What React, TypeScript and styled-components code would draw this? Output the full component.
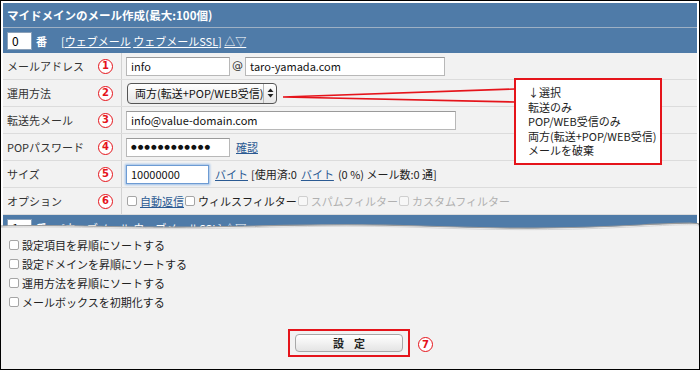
import React from "react";
import styled, { createGlobalStyle } from "styled-components";

const Global = createGlobalStyle`
  html, body { margin: 0; padding: 0; background: #fff; }
  body {
    font-family: "Noto Sans CJK JP", "DejaVu Sans", sans-serif;
    font-size: 11px;
    color: #222;
  }
  * { box-sizing: border-box; }
`;

const BLUE = "#4f7ba8";
const RED = "#e5141b";
const LINK = "#2b5a93";

const Page = styled.div`
  position: relative;
  width: 700px;
  height: 370px;
  border: 1px solid #000;
  background: #f2f2f2;
  overflow: hidden;
  display: flex;
  flex-direction: column;
`;

const TopArea = styled.div`
  background: #fff;
  padding: 2px 2px 0 2px;
  display: flex;
  flex-direction: column;
`;

const TitleBar = styled.div`
  height: 25px;
  background: ${BLUE};
  color: #fff;
  font-weight: bold;
  font-size: 11.5px;
  line-height: 25px;
  padding-left: 4px;
  border-bottom: 1px solid #9eb0c4;
`;

const NumberBar = styled.div`
  height: 25px;
  flex: none;
  background: ${BLUE};
  color: #fff;
  display: flex;
  align-items: center;
  padding-left: 4px;
  line-height: 14px;
`;

const NumBox = styled.div`
  width: 25px;
  height: 18px;
  background: #fff;
  border: 1px solid #8aa0b8;
  color: #000;
  font-size: 12px;
  padding-left: 4px;
  display: flex;
  align-items: center;
`;

const Ban = styled.span`
  font-weight: bold;
  margin-left: 4px;
`;

const BarLinks = styled.span`
  margin-left: 14px;
  white-space: pre;
`;

const WhiteLink = styled.span`
  color: #fff;
  text-decoration: underline;
`;

const Row = styled.div`
  display: grid;
  grid-template-columns: 119px 1fr;
  height: 27px;
  background: #f2f2f2;
  border-bottom: 1px solid #dcdcdc;
`;

const LabelCell = styled.div`
  display: flex;
  align-items: center;
  justify-content: space-between;
  padding: 0 8px 0 4px;
  border-right: 1px solid #d2d2d2;
  color: #333;
  line-height: 14px;
`;

const ValueCell = styled.div`
  display: flex;
  align-items: center;
  padding-left: 4px;
  line-height: 14px;
  white-space: nowrap;
`;

const Circ = styled.span`
  width: 15px;
  height: 15px;
  border: 1.5px solid ${RED};
  border-radius: 50%;
  color: ${RED};
  font-family: "DejaVu Sans", sans-serif;
  font-weight: bold;
  font-size: 10px;
  display: inline-flex;
  align-items: center;
  justify-content: center;
  line-height: 1;
  background: #fff;
`;

const TextInput = styled.div<{ w: number; focused?: boolean }>`
  width: ${(p) => p.w}px;
  height: 19px;
  background: #fff;
  border: 1px solid ${(p) => (p.focused ? "#6d9bd3" : "#b8b8b8")};
  border-top-color: ${(p) => (p.focused ? "#6d9bd3" : "#9a9a9a")};
  box-shadow: ${(p) => (p.focused ? "0 0 2px 1px #9cbfe8" : "none")};
  padding: 0 4px;
  display: flex;
  align-items: center;
  color: #111;
  font-size: 11px;
  overflow: hidden;
`;

const Dots = styled.span`
  font-family: "DejaVu Sans", sans-serif;
  font-size: 6.5px;
  letter-spacing: 1px;
`;

const At = styled.span`
  margin: 0 2px;
  color: #333;
  font-family: "DejaVu Sans", sans-serif;
  font-size: 11px;
`;

const Link = styled.span<{ ml?: number }>`
  color: ${LINK};
  text-decoration: underline;
  margin-left: ${(p) => p.ml ?? 0}px;
`;

const Plain = styled.span<{ ml?: number; muted?: boolean }>`
  margin-left: ${(p) => p.ml ?? 0}px;
  color: ${(p) => (p.muted ? "#b0b0b0" : "#222")};
`;

const Select = styled.div`
  width: 150px;
  height: 21px;
  margin-left: 1px;
  border: 1px solid #555;
  border-radius: 4px;
  background: linear-gradient(#ffffff, #e6e6e6);
  display: flex;
  align-items: center;
  color: #111;
`;

const SelectText = styled.span`
  flex: 1;
  padding-left: 7px;
`;

const SelectArrows = styled.span`
  width: 15px;
  height: 100%;
  border-left: 1px solid #b5b5b5;
  display: flex;
  align-items: center;
  justify-content: center;
`;

const Check = styled.span<{ disabled?: boolean }>`
  width: 10px;
  height: 10px;
  flex: none;
  border: 1px solid ${(p) => (p.disabled ? "#cfcfcf" : "#a5a5a5")};
  border-radius: 2px;
  background: ${(p) => (p.disabled ? "#f7f7f7" : "#fff")};
  margin: 0 3px 0 1px;
`;

const Torn = styled.div`
  position: relative;
  height: 16px;
  flex: none;
  background: #fff;
  padding: 0 2px;
  overflow: hidden;
`;

const WaveSvg = styled.svg`
  position: absolute;
  left: 0;
  bottom: 0;
  width: 700px;
  height: 9px;
`;

const BottomArea = styled.div`
  flex: 1;
  display: flex;
  flex-direction: column;
  padding-top: 4px;
`;

const OptionItem = styled.div`
  height: 19px;
  display: flex;
  align-items: center;
  padding-left: 7px;
  color: #222;
  line-height: 14px;
`;

const ButtonRow = styled.div`
  margin-top: 18px;
  display: flex;
  justify-content: center;
`;

const ButtonFrame = styled.div`
  position: relative;
  border: 2px solid ${RED};
  padding: 3px 5px 3px 5px;
  margin-left: -2px;
`;

const Button = styled.div`
  width: 108px;
  height: 18px;
  border: 1px solid #a8a8a8;
  border-radius: 4px;
  background: linear-gradient(#ffffff, #e4e4e4);
  display: flex;
  align-items: center;
  justify-content: center;
  font-weight: bold;
  color: #222;
  letter-spacing: 10px;
  padding-left: 10px;
  font-size: 11px;
`;

const ButtonBadge = styled(Circ)`
  position: absolute;
  left: 128px;
  top: 6px;
`;

const Callout = styled.div`
  position: absolute;
  left: 513px;
  top: 77px;
  width: 148px;
  height: 87px;
  border: 2px solid ${RED};
  background: #fff;
  padding: 5px 0 0 12px;
  display: flex;
  flex-direction: column;
`;

const CalloutItem = styled.div`
  height: 14.5px;
  line-height: 14.5px;
  color: #222;
  white-space: nowrap;
`;

const Pointer = styled.svg`
  position: absolute;
  left: 0;
  top: 0;
  width: 700px;
  height: 370px;
  pointer-events: none;
`;

function NumberBarContent({ n }: { n: string }) {
  return (
    <NumberBar>
      <NumBox>{n}</NumBox>
      <Ban>番</Ban>
      <BarLinks>
        [<WhiteLink>ウェブメール</WhiteLink> <WhiteLink>ウェブメールSSL</WhiteLink>] <WhiteLink>△▽</WhiteLink>
      </BarLinks>
    </NumberBar>
  );
}

export default function App() {
  return (
    <>
      <Global />
      <Page>
        <TopArea>
          <TitleBar>マイドメインのメール作成(最大:100個)</TitleBar>
          <NumberBarContent n="0" />
          <Row>
            <LabelCell>
              メールアドレス<Circ>1</Circ>
            </LabelCell>
            <ValueCell>
              <TextInput w={104}>info</TextInput>
              <At>@</At>
              <TextInput w={200}>taro-yamada.com</TextInput>
            </ValueCell>
          </Row>
          <Row>
            <LabelCell>
              運用方法<Circ>2</Circ>
            </LabelCell>
            <ValueCell>
              <Select>
                <SelectText>両方(転送+POP/WEB受信)</SelectText>
                <SelectArrows>
                  <svg width="7" height="10" viewBox="0 0 7 10">
                    <path d="M3.5 0.5 L6.5 4 L0.5 4 Z" fill="#222" />
                    <path d="M3.5 9.5 L6.5 6 L0.5 6 Z" fill="#222" />
                  </svg>
                </SelectArrows>
              </Select>
            </ValueCell>
          </Row>
          <Row>
            <LabelCell>
              転送先メール<Circ>3</Circ>
            </LabelCell>
            <ValueCell>
              <TextInput w={330}>info@value-domain.com</TextInput>
            </ValueCell>
          </Row>
          <Row>
            <LabelCell>
              POPパスワード<Circ>4</Circ>
            </LabelCell>
            <ValueCell>
              <TextInput w={104}>
                <Dots>●●●●●●●●●●●●</Dots>
              </TextInput>
              <Link ml={6}>確認</Link>
            </ValueCell>
          </Row>
          <Row>
            <LabelCell>
              サイズ<Circ>5</Circ>
            </LabelCell>
            <ValueCell>
              <TextInput w={83} focused>
                10000000
              </TextInput>
              <Link ml={6}>バイト</Link>
              <Plain ml={3}>[使用済:0</Plain>
              <Link ml={4}>バイト</Link>
              <Plain ml={4}>(0 %) メール数:0 通]</Plain>
            </ValueCell>
          </Row>
          <Row>
            <LabelCell>
              オプション<Circ>6</Circ>
            </LabelCell>
            <ValueCell>
              <Check />
              <Link>自動返信</Link>
              <Check />
              <Plain>ウィルスフィルター</Plain>
              <Check disabled />
              <Plain muted>スパムフィルター</Plain>
              <Check disabled />
              <Plain muted>カスタムフィルター</Plain>
            </ValueCell>
          </Row>
        </TopArea>
        <Torn>
          <NumberBarContent n="1" />
          <WaveSvg viewBox="0 0 700 9" preserveAspectRatio="none">
            <path
              d="M0 4 C 60 2, 120 6, 200 5 S 330 1, 420 4 S 560 7, 640 3 S 690 3, 700 3 L700 9 L0 9 Z"
              fill="#f2f2f2"
            />
            <path
              d="M0 4 C 60 2, 120 6, 200 5 S 330 1, 420 4 S 560 7, 640 3 S 690 3, 700 3"
              fill="none"
              stroke="#9a9a9a"
              strokeWidth="1.2"
            />
            <path
              d="M0 5.5 C 60 3.5, 120 7.5, 200 6.5 S 330 2.5, 420 5.5 S 560 8.5, 640 4.5 S 690 4.5, 700 4.5"
              fill="none"
              stroke="#d6d6d6"
              strokeWidth="1"
            />
          </WaveSvg>
        </Torn>
        <BottomArea>
          <OptionItem>
            <Check />
            設定項目を昇順にソートする
          </OptionItem>
          <OptionItem>
            <Check />
            設定ドメインを昇順にソートする
          </OptionItem>
          <OptionItem>
            <Check />
            運用方法を昇順にソートする
          </OptionItem>
          <OptionItem>
            <Check />
            メールボックスを初期化する
          </OptionItem>
          <ButtonRow>
            <ButtonFrame>
              <Button>設定</Button>
              <ButtonBadge>7</ButtonBadge>
            </ButtonFrame>
          </ButtonRow>
        </BottomArea>

        <Pointer viewBox="0 0 700 370">
          <polyline
            points="514,88 282,96 514,101"
            fill="none"
            stroke={RED}
            strokeWidth="1.6"
          />
        </Pointer>
        <Callout>
          <CalloutItem>↓選択</CalloutItem>
          <CalloutItem>転送のみ</CalloutItem>
          <CalloutItem>POP/WEB受信のみ</CalloutItem>
          <CalloutItem>両方(転送+POP/WEB受信)</CalloutItem>
          <CalloutItem>メールを破棄</CalloutItem>
        </Callout>
      </Page>
    </>
  );
}
